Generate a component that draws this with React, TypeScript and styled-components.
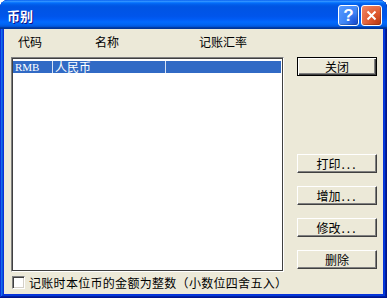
import React from "react";
import styled, { createGlobalStyle } from "styled-components";

const GlobalStyle = createGlobalStyle`
  html, body { margin: 0; padding: 0; background: #ffffff; }
  * { box-sizing: border-box; }
`;

const CJK = `"Noto Sans CJK SC", "Noto Sans", sans-serif`;

const Window = styled.div`
  width: 387px;
  height: 298px;
  display: flex;
  flex-direction: column;
  border-radius: 8px 8px 0 0;
  overflow: hidden;
  background: #0831d9;
  box-shadow: inset -1px -1px #00138c, inset 1px 1px #0831d9,
    inset -2px -2px #001ea0, inset 2px 2px #166aee,
    inset -3px -3px #003bda, inset 3px 3px #0855dd;
  padding: 0 4px 4px 4px;
  font-family: ${CJK};
`;

const TitleBar = styled.div`
  height: 29px;
  margin: 0 -4px;
  display: flex;
  align-items: flex-start;
  padding: 5px 5px 0 7px;
  background: linear-gradient(
    to bottom,
    #0058ee 0%,
    #3593ff 4%,
    #288eff 6%,
    #127dff 8%,
    #036ffc 10%,
    #0262ee 14%,
    #0057e5 20%,
    #0054e3 24%,
    #0055eb 56%,
    #005bf5 66%,
    #026afe 76%,
    #0062ef 86%,
    #0052d6 92%,
    #0040ab 94%,
    #003092 100%
  );
`;

const Title = styled.div`
  flex: 1;
  color: #ffffff;
  font-weight: bold;
  font-size: 13px;
  line-height: 21px;
  text-shadow: 1px 1px #0f1089;
`;

const CaptionButton = styled.div<{ $kind: "help" | "close" }>`
  width: 21px;
  height: 21px;
  margin-left: 2px;
  border: 1px solid #ffffff;
  border-radius: 3px;
  display: flex;
  align-items: center;
  justify-content: center;
  color: #ffffff;
  font-family: "Liberation Sans", Arial, sans-serif;
  font-weight: bold;
  font-size: 17px;
  background: ${(p) =>
    p.$kind === "help"
      ? "radial-gradient(circle at 85% 85%, #1a4fd6 0%, #3c82f5 40%, #5a9cff 100%)"
      : "radial-gradient(circle at 85% 85%, #c23f17 0%, #e0592f 40%, #f08a6a 100%)"};
  box-shadow: inset -1px -1px 1px rgba(0, 0, 0, 0.25);
`;

const Body = styled.div`
  flex: 1;
  background: #ece9d8;
  display: flex;
  flex-direction: column;
  padding: 7px 0 0 7px;
  font-size: 12px;
  color: #000000;
`;

const HeaderRow = styled.div`
  height: 21px;
  display: flex;
  align-items: flex-start;
  padding-left: 7px;
  line-height: 12px;
`;

const HeaderLabel = styled.div<{ $w: number }>`
  width: ${(p) => p.$w}px;
  font-size: 12px;
  line-height: 12px;
`;

const MainRow = styled.div`
  display: flex;
  align-items: flex-start;
`;

const ListBox = styled.div`
  width: 273px;
  height: 215px;
  background: #ffffff;
  border-style: solid;
  border-width: 1px;
  border-color: #808080 #ffffff #ffffff #808080;
  box-shadow: inset 1px 1px #404040, inset -1px -1px #404040;
  padding: 3px 0 0 1px;
`;

const ListRow = styled.div<{ $selected?: boolean }>`
  width: 268px;
  height: 12px;
  display: flex;
  background: ${(p) => (p.$selected ? "#316ac5" : "transparent")};
  color: ${(p) => (p.$selected ? "#ffffff" : "#000000")};
  font-size: 11px;
  line-height: 12px;
`;

const Cell = styled.div<{ $w: number; $latin?: boolean }>`
  width: ${(p) => p.$w}px;
  padding-left: 2px;
  border-right: 1px solid #d8e2f4;
  font-family: ${(p) => (p.$latin ? `"Liberation Serif", serif` : CJK)};
  font-size: ${(p) => (p.$latin ? "11px" : "12px")};
  white-space: nowrap;
`;

const ButtonColumn = styled.div`
  margin-left: 13px;
  width: 80px;
  display: flex;
  flex-direction: column;
  gap: 13px;
`;

const Button = styled.div<{ $default?: boolean; $after?: number }>`
  height: 19px;
  width: 80px;
  display: flex;
  align-items: center;
  justify-content: center;
  font-size: 12px;
  background: #ece9d8;
  margin-bottom: ${(p) => p.$after ?? 0}px;
  border: 1px solid;
  border-color: ${(p) =>
    p.$default ? "#000000" : "#ffffff #404040 #404040 #ffffff"};
  box-shadow: ${(p) =>
    p.$default
      ? "inset 1px 1px #ffffff, inset -1px -1px #404040, inset -2px -2px #808080"
      : "inset -1px -1px #808080"};
`;

const Dots = styled.span`
  letter-spacing: 2px;
  margin-left: 1px;
`;

const CheckRow = styled.div`
  margin-top: 4px;
  display: flex;
  align-items: center;
  height: 13px;
`;

const CheckBox = styled.div`
  width: 13px;
  height: 13px;
  margin-left: 1px;
  background: #ffffff;
  border-style: solid;
  border-width: 1px;
  border-color: #808080 #ffffff #ffffff #808080;
  box-shadow: inset 1px 1px #404040, inset -1px -1px #d4d0c8;
`;

const CheckLabel = styled.div`
  margin-left: 4px;
  font-size: 12px;
  line-height: 13px;
  letter-spacing: 0.3px;
  white-space: nowrap;
`;

export default function App() {
  return (
    <>
      <GlobalStyle />
      <Window>
        <TitleBar>
          <Title>币别</Title>
          <CaptionButton $kind="help">?</CaptionButton>
          <CaptionButton $kind="close">
            <svg width="11" height="11" viewBox="0 0 11 11">
              <path d="M1.5 1.5 L9.5 9.5 M9.5 1.5 L1.5 9.5" stroke="#fff" strokeWidth="2" />
            </svg>
          </CaptionButton>
        </TitleBar>
        <Body>
          <HeaderRow>
            <HeaderLabel $w={77}>代码</HeaderLabel>
            <HeaderLabel $w={104}>名称</HeaderLabel>
            <HeaderLabel $w={80}>记账汇率</HeaderLabel>
          </HeaderRow>
          <MainRow>
            <ListBox>
              <ListRow $selected>
                <Cell $w={40} $latin>RMB</Cell>
                <Cell $w={113}>人民币</Cell>
              </ListRow>
            </ListBox>
            <ButtonColumn>
              <Button $default $after={65}>关闭</Button>
              <Button>打印<Dots>...</Dots></Button>
              <Button>增加<Dots>...</Dots></Button>
              <Button>修改<Dots>...</Dots></Button>
              <Button>删除</Button>
            </ButtonColumn>
          </MainRow>
          <CheckRow>
            <CheckBox />
            <CheckLabel>记账时本位币的金额为整数（小数位四舍五入）</CheckLabel>
          </CheckRow>
        </Body>
      </Window>
    </>
  );
}
